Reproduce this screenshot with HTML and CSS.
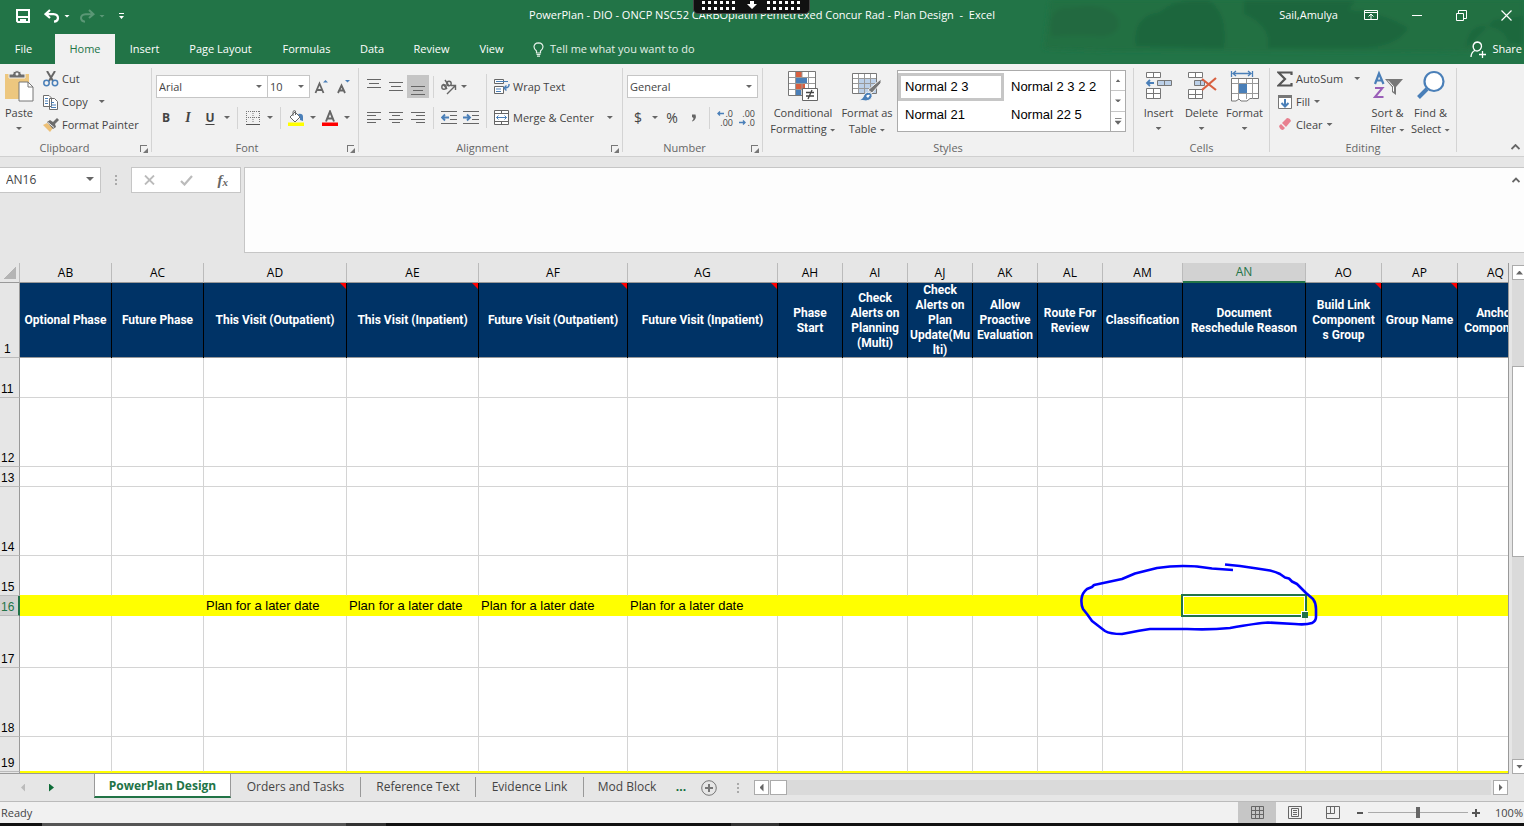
FILE: index.html
```html
<!DOCTYPE html>
<html lang="en">
<head>
<meta charset="utf-8">
<title>PowerPlan - Plan Design - Excel</title>
<link rel="stylesheet" href="styles.css">
</head>
<body>
<div class="app">
  <header class="top">
    <svg class="top-art" width="504" height="64" viewBox="0 0 504 64" aria-hidden="true">
      <defs><filter id="soft"><feGaussianBlur stdDeviation="2"/></filter></defs>
      <g filter="url(#soft)">
        <path d="M30 0h474v50l-90 2-320-1-70-2z" fill="#216f42"/>
        <path d="M32 36q-6-30 18-28 34-6 46 8 8 16-12 20-28-2-52 0z" fill="#206940"/>
        <path d="M116 46q-4-30 24-34 14-12 34-12h14q20 12 16 48z" fill="#1f663d"/>
        <path d="M224 0h112l-8 10q34 2 60 18-10 18-44 20h-96q4-22-24-34z" fill="#1f663d"/>
        <path d="M446 48q2-24 22-22 18 4 20 16l16 2V16l-30 4z" fill="#1f683e"/>
      </g>
    </svg>
    <div class="titlebar">
      <div class="quick">
        <button aria-label="Save"><svg width="14" height="14" viewBox="0 0 14 14"><path d="M1 1h12v12H2l-1-1z" fill="none" stroke="#fff" stroke-width="2"/><path d="M2 7h10v2H2zM4 10h6v4H8v-2H6v2H4z" fill="#fff"/></svg></button>
        <button class="undo" aria-label="Undo"><svg width="16" height="14" viewBox="0 0 16 14"><path d="M6 1L1.500 5.200 6 9M2 5.200h7.500q4.500.3 4.500 4-.3 3.300-4 3.500" fill="none" stroke="#fff" stroke-width="2.200"/></svg><i class="caret"></i></button>
        <button class="redo" aria-label="Redo"><svg width="16" height="14" viewBox="0 0 16 14"><path d="M10 1l4.500 4.200L10 9M14 5.200H6.500Q2 5.500 2 9.200q.3 3.300 4 3.500" fill="none" stroke="#fff" stroke-width="2"/></svg><i class="caret"></i></button>
        <button class="more" aria-label="Customize"><svg width="5" height="6" viewBox="0 0 5 6"><path d="M0 0h5v1H0zM0 3h5L2.500 6z" fill="#fff"/></svg></button>
      </div>
      <div class="title">PowerPlan - DIO - ONCP NSC52 CARBOplatin Pemetrexed Concur Rad - Plan Design&nbsp; -&nbsp; Excel</div>
      <div class="dock"><svg width="34" height="10" viewBox="0 0 34 10"><path d="M0 2.500h34M0 8.500h34" stroke="#fff" stroke-width="3" stroke-dasharray="3 3"/></svg><svg width="10" height="8" viewBox="0 0 10 8"><path d="M3 0h4v3h3L5 8 0 3h3z" fill="#fff"/></svg><svg width="34" height="10" viewBox="0 0 34 10"><path d="M0 2.500h34M0 8.500h34" stroke="#fff" stroke-width="3" stroke-dasharray="3 3"/></svg></div>
      <div class="window">
        <span>Sail,Amulya</span>
        <button aria-label="Ribbon display options"><svg width="14" height="12" viewBox="0 0 14 12"><path d="M.5 1.500h13v9H.5zM.5 3.500h13M7 10V5M4.500 7.500L7 5l2.500 2.500" fill="none" stroke="#fff"/></svg></button>
        <button aria-label="Minimize"><svg width="10" height="10" viewBox="0 0 10 10"><path d="M0 5.500h10" stroke="#fff"/></svg></button>
        <button aria-label="Restore"><svg width="11" height="11" viewBox="0 0 11 11"><path d="M.5 3.500h7v7h-7zM2.500 3V.5h8v8H8" fill="none" stroke="#fff"/></svg></button>
        <button aria-label="Close"><svg width="11" height="11" viewBox="0 0 11 11"><path d="M.5.5l10 10M10.500.5l-10 10" stroke="#fff" stroke-width="1.200"/></svg></button>
      </div>
    </div>
    <nav class="tabs">
      <button class="file">File</button><button class="on">Home</button><button>Insert</button><button>Page Layout</button><button>Formulas</button><button>Data</button><button>Review</button><button>View</button>
      <button class="tell"><svg width="11" height="15" viewBox="0 0 11 15"><path d="M3.500 11V9Q1 7 1 4.800 1.200 1 5.500.8 9.800 1 10 4.800 10 7 7.500 9v2zM3.500 12.500h4M4 14.200h3" fill="none" stroke="#e4f0e8" stroke-width="1.200"/></svg>Tell me what you want to do</button>
      <button class="share"><svg width="16" height="17" viewBox="0 0 16 17"><path d="M1 16q.3-5 4-6.500Q2.500 7 3.300 4 4.500 1 7.500 1q4 .5 4 4.300Q11 9 7.500 10q-1.500 0-2.500-.5M9 13.500h7M12.500 10v7" fill="none" stroke="#fff" stroke-width="1.300"/></svg>Share</button>
    </nav>
  </header>

  <section class="ribbon">
    <div class="group g-clip">
      <div class="body">
        <button class="big paste"><svg width="30" height="32" viewBox="0 0 30 32"><path d="M1 4h24v25H1z" fill="#edc77f"/><path d="M5 8V4h4V2q4-3 8 0v2h4v4z" fill="#6d6d6d" stroke="#f1f1f1"/><circle cx="13" cy="4" r="1.500" fill="#f1f1f1"/><path d="M15 12h9l5 5v14H15z" fill="#fff" stroke="#777"/><path d="M24 12v5h5" fill="none" stroke="#777"/></svg><span>Paste</span><i class="caret"></i></button>
        <div class="stack">
          <button><svg width="16" height="16" viewBox="0 0 16 16"><path d="M4 0l6 10M12 0L6 10" stroke="#666" stroke-width="2"/><circle cx="3.500" cy="12" r="2.700" fill="none" stroke="#4a7fb8" stroke-width="1.500"/><circle cx="12" cy="12" r="2.700" fill="none" stroke="#4a7fb8" stroke-width="1.500"/></svg>Cut</button>
          <button><svg width="16" height="16" viewBox="0 0 16 16"><path d="M.5 1.500H6L8.500 4v8.500h-8zM6.500 4.500h5l3 3v8h-8z" fill="#fff" stroke="#6d6d6d"/><path d="M2 4.500h3M2 7h3M2 9.500h3M8 8.500h3M8 11h5M8 13.500h5" stroke="#4a7fb8"/></svg>Copy<i class="caret gap"></i></button>
          <button><svg width="16" height="16" viewBox="0 0 16 16"><path d="M0 8l4-2 6 5-3 4z" fill="#edc077"/><path d="M4 5l3-2 3 2 4-4 2 2-4 4 1 3-3 2z" fill="#6d6d6d"/><path d="M5 5.500l6 5" stroke="#f1f1f1"/></svg>Format Painter</button>
        </div>
      </div>
      <div class="label">Clipboard<i class="launch"></i></div>
    </div>

    <div class="group g-font">
      <div class="body rows">
        <div class="line">
          <span class="pick font"><select aria-label="Font"><option>Arial</option></select></span><span class="pick size"><select aria-label="Font size"><option>10</option></select></span>
          <button class="ico" aria-label="Increase font size"><svg width="16" height="16" viewBox="0 0 16 16"><path d="M2.500 14L6.500 4.500 10.500 14M4 11h5" fill="none" stroke="#666" stroke-width="1.800"/><path d="M10 3.500L12.500 1 15 3.500z" fill="#4a7fb8"/></svg></button>
          <button class="ico" aria-label="Decrease font size"><svg width="16" height="16" viewBox="0 0 16 16"><path d="M3 14l3.500-7.500L10 14M4.500 11.500h4" fill="none" stroke="#666" stroke-width="1.800"/><path d="M10 1h5l-2.500 2.500z" fill="#4a7fb8"/></svg></button>
        </div>
        <div class="line">
          <button class="ico b">B</button><button class="ico i">I</button><button class="ico u">U</button><button class="drop" aria-label="Underline options"><i class="caret"></i></button><i class="sep"></i>
          <button class="ico" aria-label="Borders"><svg width="14" height="14" viewBox="0 0 14 14"><path d="M0 .5h14M0 6.500h14M.5 0v12M7 0v12M13.500 0v12" stroke="#777" stroke-dasharray="1 1"/><path d="M0 13.500h14" stroke="#555"/></svg></button><button class="drop" aria-label="Border options"><i class="caret"></i></button><i class="sep"></i>
          <button class="ico" aria-label="Fill color"><svg width="16" height="16" viewBox="0 0 16 16"><path d="M2 7l5-5 5 5-5 5z" fill="#fff" stroke="#666"/><path d="M5 6V1.500Q6 0 7.500 1v4" fill="none" stroke="#666"/><path d="M10 4q5-1 5 3v4l-3-1V7z" fill="#4a7fb8"/><path d="M0 12.500h16V16H0z" fill="#ff0"/></svg></button><button class="drop" aria-label="Fill options"><i class="caret"></i></button>
          <button class="ico" aria-label="Font color"><svg width="16" height="16" viewBox="0 0 16 16"><path d="M4 11.500L8 1.500l4 10M5.500 8.500h5" fill="none" stroke="#666" stroke-width="2"/><path d="M0 12.500h16V16H0z" fill="#f00"/></svg></button><button class="drop" aria-label="Font color options"><i class="caret"></i></button>
        </div>
      </div>
      <div class="label">Font<i class="launch"></i></div>
    </div>

    <div class="group g-align">
      <div class="body">
        <div class="rows">
          <div class="line">
            <button class="ico" aria-label="Top align"><svg width="14" height="16" viewBox="0 0 14 16"><path d="M0 .5h14M2 4.500h10M0 8.500h14" stroke="#666"/></svg></button>
            <button class="ico" aria-label="Middle align"><svg width="14" height="16" viewBox="0 0 14 16"><path d="M0 3.500h14M2 7.500h10M0 11.500h14" stroke="#666"/></svg></button>
            <button class="ico pressed" aria-label="Bottom align"><svg width="14" height="16" viewBox="0 0 14 16"><path d="M0 7.500h14M2 11.500h10M0 15.500h14" stroke="#666"/></svg></button><i class="sep"></i>
            <button class="ico" aria-label="Orientation"><svg width="18" height="16" viewBox="0 0 18 16"><g fill="none" stroke="#666" stroke-width="1.400"><circle cx="4" cy="8" r="2.200"/><path d="M3 5l4 5"/><circle cx="9" cy="4.500" r="2.200"/><path d="M5 1l4 6M7 15l8-8M11 6.500h4.500V11"/></g></svg></button><button class="drop near" aria-label="Orientation options"><i class="caret"></i></button>
          </div>
          <div class="line">
            <button class="ico" aria-label="Align left"><svg width="14" height="12" viewBox="0 0 14 12"><path d="M0 .5h14M0 3.500h9M0 7.500h14M0 10.500h9" stroke="#666"/></svg></button>
            <button class="ico" aria-label="Center"><svg width="14" height="12" viewBox="0 0 14 12"><path d="M0 .5h14M3 3.500h8M0 7.500h14M3 10.500h8" stroke="#666"/></svg></button>
            <button class="ico" aria-label="Align right"><svg width="14" height="12" viewBox="0 0 14 12"><path d="M0 .5h14M5 3.500h9M0 7.500h14M5 10.500h9" stroke="#666"/></svg></button><i class="sep"></i>
            <button class="ico" aria-label="Decrease indent"><svg width="16" height="14" viewBox="0 0 16 14"><path d="M0 .5h16M9 4.500h7M9 8.500h7M0 12.500h16" stroke="#666"/><path d="M1 6.500h7M4 3.500l-3 3 3 3" fill="none" stroke="#4a7fb8" stroke-width="1.800"/></svg></button>
            <button class="ico" aria-label="Increase indent"><svg width="16" height="14" viewBox="0 0 16 14"><path d="M0 .5h16M9 4.500h7M9 8.500h7M0 12.500h16" stroke="#666"/><path d="M0 6.500h7M4 3.500l3 3-3 3" fill="none" stroke="#4a7fb8" stroke-width="1.800"/></svg></button>
          </div>
        </div>
        <i class="rule"></i>
        <div class="rows">
          <button class="line text"><svg width="16" height="16" viewBox="0 0 16 16"><path d="M.5.5h9v4h-9zM.5 7.500h9v7h-9z" fill="#fff" stroke="#666"/><path d="M2 2.500h12M2 10h5M2 12.500h5" stroke="#4a7fb8"/><path d="M15 5q.5 4-4.500 4M12.500 6.500L10 9l2.500 2.500" fill="none" stroke="#4a7fb8" stroke-width="1.400"/></svg>Wrap Text</button>
          <button class="line text"><svg width="16" height="16" viewBox="0 0 16 16"><path d="M.5.5h14v14H.5zM.5 3.500h14M.5 11.500h14M7.500 .5v3M7.500 11.500v3" fill="#fff" stroke="#666"/><path d="M2.500 7.500h10M4.500 5.500l-2 2 2 2M10.500 5.500l2 2-2 2" fill="none" stroke="#4a7fb8"/></svg>Merge &amp; Center<i class="caret gap"></i></button>
        </div>
      </div>
      <div class="label">Alignment<i class="launch"></i></div>
    </div>

    <div class="group g-num">
      <div class="body rows">
        <div class="line"><span class="pick format"><select aria-label="Number format"><option>General</option></select></span></div>
        <div class="line">
          <button class="ico sym">$</button><button class="drop" aria-label="Currency options"><i class="caret"></i></button><button class="ico sym">%</button><button class="ico" aria-label="Comma style"><svg width="6" height="8" viewBox="0 0 6 8"><path d="M1 .5h3.500Q6 5 1.500 7.500L1 7q1.500-1.500 1.500-3L1 3z" fill="#666"/></svg></button><i class="sep"></i>
          <button class="ico dec" aria-label="Increase decimal"><span><svg width="7" height="5" viewBox="0 0 7 5"><path d="M7 2.500H1M3 .5l-2 2 2 2" fill="none" stroke="#4a7fb8" stroke-width="1.400"/></svg>.0</span><span>.00</span></button>
          <button class="ico dec" aria-label="Decrease decimal"><span>.00</span><span><svg width="7" height="5" viewBox="0 0 7 5"><path d="M0 2.500h6M4 .5l2 2-2 2" fill="none" stroke="#4a7fb8" stroke-width="1.400"/></svg>.0</span></button>
        </div>
      </div>
      <div class="label">Number<i class="launch"></i></div>
    </div>

    <div class="group g-styles">
      <div class="body">
        <button class="big cond"><svg width="32" height="32" viewBox="0 0 32 32"><path d="M1.500 1.500h27v24h-27z" fill="#fff" stroke="#777"/><path d="M9 2h6v5H9zM9 14h9v5H9z" fill="#d86040"/><path d="M9 8h11v5H9zM9 20h5v5H9z" fill="#4a7fb8"/><path d="M2 7.500h26M2 13.500h26M2 19.500h26M8.500 2v23M15 2v5M15 14v11M21.500 2v23" fill="none" stroke="#999"/><path d="M15.500 18.500h15v12h-15z" fill="#fff" stroke="#666"/><path d="M19 22.500h8M19 26h8M25 20l-4 9" stroke="#444" stroke-width="1.300"/></svg><span>Conditional<br>Formatting <i class="caret"></i></span></button>
        <button class="big fmt"><svg width="32" height="32" viewBox="0 0 32 32"><path d="M1.500 3.500h24v20h-24z" fill="#fff" stroke="#777"/><path d="M8 9h17v14H8z" fill="#bcd0e8"/><path d="M2 8.500h23M2 13.500h23M2 18.500h23M7.500 4v19M13.500 4v19M19.500 4v19" stroke="#999"/><path d="M30 9v4L21 23l-4-3z" fill="#777" stroke="#f1f1f1"/><path d="M8 30q4-1 5-5 3-5 8-1 1 6-6 7z" fill="#4a7fb8" stroke="#f1f1f1"/><path d="M15 26q2-2 4-1l-2 3z" fill="#fff"/></svg><span>Format as<br>Table <i class="caret"></i></span></button>
        <div class="gallery">
          <div class="cells"><button class="sel">Normal 2 3</button><button>Normal 2 3 2 2</button><button>Normal 21</button><button>Normal 22 5</button></div>
          <div class="steps"><button aria-label="Row up"><i class="caret up"></i></button><button aria-label="Row down"><i class="caret"></i></button><button aria-label="More styles"><i class="caret bar"></i></button></div>
        </div>
      </div>
      <div class="label">Styles</div>
    </div>

    <div class="group g-cells">
      <div class="body">
        <button class="big"><svg width="28" height="32" viewBox="0 0 28 32"><path d="M1.500 2.500h14v5h-14zM8.500 2.500v5M1.500 18.500h14v10h-14zM8.500 18.500v10M1.500 23.500h14" fill="#fff" stroke="#777"/><path d="M12.500 10.500h14v5h-14zM19.500 10.500v5" fill="#bcd0e8" stroke="#777"/><path d="M2 13h7M5 10l-3 3 3 3" fill="none" stroke="#4a7fb8" stroke-width="1.800"/></svg><span>Insert</span><i class="caret"></i></button>
        <button class="big"><svg width="30" height="32" viewBox="0 0 30 32"><path d="M1.500 2.500h14v5h-14zM8.500 2.500v5M1.500 19.500h14v9h-14zM8.500 19.500v9M1.500 24.500h14" fill="#fff" stroke="#777"/><path d="M7.500 10.500h10v5h-10zM13.500 10.500v5" fill="#bcd0e8" stroke="#777"/><path d="M15 9l14 11M29 8L15 20" stroke="#d86040" stroke-width="2.200"/></svg><span>Delete</span><i class="caret"></i></button>
        <button class="big"><svg width="30" height="32" viewBox="0 0 30 32"><path d="M1.500 1v6M22.500 1v6M3 3.500h18M6 1L3 3.500 6 6M18 1l3 2.500L18 6" fill="none" stroke="#4a7fb8" stroke-width="1.300"/><path d="M1.500 8.500h27v20H20l-3 2.500h-6l-2-2-3 2H1.500z" fill="#fff" stroke="#777"/><path d="M8.500 9v20M16.500 9v20M22.500 9v20M2 13.500h26M2 23.500h26" stroke="#999"/><path d="M9 14h8v9H9z" fill="#4a7fb8"/></svg><span>Format</span><i class="caret"></i></button>
      </div>
      <div class="label">Cells</div>
    </div>

    <div class="group g-edit">
      <div class="body">
        <div class="stack">
          <button><svg width="16" height="16" viewBox="0 0 16 16"><path d="M14.500 4V1.500H1.500L8 8l-6.500 6.500h13V12" fill="none" stroke="#555" stroke-width="2.200"/></svg>AutoSum<i class="caret gap"></i></button>
          <button><svg width="16" height="16" viewBox="0 0 16 16"><path d="M1.500 1.500h13v13h-13z" fill="#fff" stroke="#777"/><path d="M1 1h14v3H1z" fill="#777"/><path d="M8 5v7M4.500 9L8 12.500 11.500 9" fill="none" stroke="#4a7fb8" stroke-width="2"/></svg>Fill<i class="caret"></i></button>
          <button><svg width="16" height="16" viewBox="0 0 16 16"><path d="M5 6l5-5q3 0 4 3l-5 6z" fill="#e8808f"/><path d="M4 7l4 4-2 2q-3 0-4-4z" fill="#e8808f"/></svg>Clear<i class="caret"></i></button>
        </div>
        <button class="big"><svg width="30" height="32" viewBox="0 0 30 32"><path d="M2 14L6 3.500 10.500 14M3.500 10.500h6" fill="none" stroke="#4a7fb8" stroke-width="2.200"/><path d="M2 18h7.500L2 27h8.500" fill="none" stroke="#9a5fb8" stroke-width="2"/><path d="M12 9h18l-7 8v8l-4-3v-5z" fill="#777"/><path d="M15 10.500l5.500 6v5" stroke="#fff" fill="none"/></svg><span>Sort &amp;<br>Filter <i class="caret"></i></span></button>
        <button class="big"><svg width="30" height="32" viewBox="0 0 30 32"><path d="M11 19L2.500 27.500" stroke="#4a7fb8" stroke-width="4"/><circle cx="18" cy="11.500" r="9.500" fill="#fff" stroke="#4a7fb8" stroke-width="2.200"/></svg><span>Find &amp;<br>Select <i class="caret"></i></span></button>
      </div>
      <div class="label">Editing</div>
    </div>
    <button class="collapse" aria-label="Collapse ribbon"><svg width="9" height="6" viewBox="0 0 9 6"><path d="M.5 5l4-4 4 4" fill="none" stroke="#666" stroke-width="1.800"/></svg></button>
  </section>

  <section class="formula">
    <span class="pick name"><input aria-label="Name box" value="AN16"></span>
    <i class="grip"></i>
    <div class="fx">
      <button aria-label="Cancel"><svg width="11" height="10" viewBox="0 0 11 10"><path d="M1 .5l9 9M10 .5l-9 9" stroke="#bbb" stroke-width="1.800"/></svg></button>
      <button aria-label="Enter"><svg width="13" height="11" viewBox="0 0 13 11"><path d="M1 6l3.500 3.500L12 1" fill="none" stroke="#bbb" stroke-width="2.200"/></svg></button>
      <button class="fn">f<small>x</small></button>
    </div>
    <textarea aria-label="Formula bar"></textarea>
    <button class="fold" aria-label="Collapse formula bar"><svg width="8" height="6" viewBox="0 0 8 6"><path d="M.5 5L4 1.500 7.500 5" fill="none" stroke="#666" stroke-width="1.800"/></svg></button>
  </section>

  <main class="work">
    <div class="sheet">
      <table>
        <colgroup><col class="c20"><col class="c92"><col class="c92"><col class="c143"><col class="c132"><col class="c149"><col class="c150"><col class="c65"><col class="c65"><col class="c65"><col class="c65"><col class="c65"><col class="c80"><col class="c123"><col class="c76"><col class="c76"><col class="c76"></colgroup>
        <thead><tr><th class="corner"></th><th>AB</th><th>AC</th><th>AD</th><th>AE</th><th>AF</th><th>AG</th><th>AH</th><th>AI</th><th>AJ</th><th>AK</th><th>AL</th><th>AM</th><th class="cur">AN</th><th>AO</th><th>AP</th><th>AQ</th></tr></thead>
        <tbody>
        <tr class="head h75"><th>1</th><td>Optional Phase</td><td>Future Phase</td><td class="note">This Visit (Outpatient)</td><td class="note">This Visit (Inpatient)</td><td class="note">Future Visit (Outpatient)</td><td class="note">Future Visit (Inpatient)</td><td>Phase<br>Start</td><td>Check<br>Alerts on<br>Planning<br>(Multi)</td><td>Check<br>Alerts on<br>Plan<br>Update(Mu<br>lti)</td><td>Allow<br>Proactive<br>Evaluation</td><td>Route For<br>Review</td><td>Classification</td><td>Document<br>Reschedule Reason</td><td class="note">Build Link<br>Component<br>s Group</td><td class="note">Group Name</td><td>Anchor<br>Component</td></tr>
        <tr class="h40"><th>11</th><td></td><td></td><td></td><td></td><td></td><td></td><td></td><td></td><td></td><td></td><td></td><td></td><td></td><td></td><td></td><td></td></tr>
        <tr class="h69"><th>12</th><td></td><td></td><td></td><td></td><td></td><td></td><td></td><td></td><td></td><td></td><td></td><td></td><td></td><td></td><td></td><td></td></tr>
        <tr class="h20"><th>13</th><td></td><td></td><td></td><td></td><td></td><td></td><td></td><td></td><td></td><td></td><td></td><td></td><td></td><td></td><td></td><td></td></tr>
        <tr class="h69"><th>14</th><td></td><td></td><td></td><td></td><td></td><td></td><td></td><td></td><td></td><td></td><td></td><td></td><td></td><td></td><td></td><td></td></tr>
        <tr class="h40 above"><th>15</th><td></td><td></td><td></td><td></td><td></td><td></td><td></td><td></td><td></td><td></td><td></td><td></td><td></td><td></td><td></td><td></td></tr>
        <tr class="h20 fill"><th class="cur">16</th><td></td><td></td><td>Plan for a later date</td><td>Plan for a later date</td><td>Plan for a later date</td><td>Plan for a later date</td><td></td><td></td><td></td><td></td><td></td><td></td><td class="active"></td><td></td><td></td><td></td></tr>
        <tr class="h52"><th>17</th><td></td><td></td><td></td><td></td><td></td><td></td><td></td><td></td><td></td><td></td><td></td><td></td><td></td><td></td><td></td><td></td></tr>
        <tr class="h69"><th>18</th><td></td><td></td><td></td><td></td><td></td><td></td><td></td><td></td><td></td><td></td><td></td><td></td><td></td><td></td><td></td><td></td></tr>
        <tr class="h35 above"><th>19</th><td></td><td></td><td></td><td></td><td></td><td></td><td></td><td></td><td></td><td></td><td></td><td></td><td></td><td></td><td></td><td></td></tr>
        <tr class="h20 fill"><th></th><td></td><td></td><td></td><td></td><td></td><td></td><td></td><td></td><td></td><td></td><td></td><td></td><td></td><td></td><td></td><td></td></tr>
        </tbody>
      </table>
      <svg class="ink" width="240" height="76" viewBox="0 0 240 76" aria-hidden="true"><path d="M145 1.500L160 3L177 5.500L190 7.500Q196 9 200 11L205 14.500L209 15.500L212 18.500L217 21L226 30L233 36Q236 40 236 46V54Q236 58 232 60Q226 62 215 61L188 59.500Q178 60 150 65Q130 67 107 66H70Q62 67 42 71Q30 71 25 68L12 58L7 51L3 46Q1 42 1.500 36Q2 30 7 26L12 24L14 22L42 16L55 10.500L65 8L77 5Q90 3 103 3Q112 3 117 3.500L132 5.500L153 7" fill="none" stroke="#00f" stroke-width="2.600" stroke-linejoin="round"/></svg>
    </div>
    <div class="vbar"><button aria-label="Scroll up"><i class="caret up"></i></button><div class="vtrack"><i class="vthumb"></i></div><button aria-label="Scroll down"><i class="caret"></i></button></div>
  </main>

  <footer class="sheets">
    <div class="nav"><button class="prev" aria-label="Previous sheets"></button><button class="next" aria-label="Next sheets"></button></div>
    <button class="tab on">PowerPlan Design</button><button class="tab t2">Orders and Tasks</button><button class="tab t3">Reference Text</button><button class="tab t4">Evidence Link</button><button class="tab t5">Mod Block</button>
    <button class="dots">...</button>
    <button class="add" aria-label="New sheet"><svg width="16" height="16" viewBox="0 0 16 16"><circle cx="8" cy="8" r="7.300" fill="none" stroke="#777"/><path d="M4 8h8M8 4v8" stroke="#777" stroke-width="2"/></svg></button>
    <i class="grip"></i>
    <div class="hbar"><button aria-label="Scroll left"><i class="caret left"></i></button><i class="hthumb"></i><div class="htrack"></div><button aria-label="Scroll right"><i class="caret right"></i></button></div>
  </footer>

  <div class="status">
    <span class="ready">Ready</span>
    <button class="view on" aria-label="Normal view"><svg width="13" height="13" viewBox="0 0 13 13"><path d="M.5.5h12v12H.5zM4.500 0v13M8.500 0v13M0 4.500h13M0 8.500h13" fill="none" stroke="#666"/></svg></button>
    <button class="view" aria-label="Page layout view"><svg width="14" height="13" viewBox="0 0 14 13"><path d="M.5.5h13v12H.5zM3.500 2.500h7v8h-7zM5 4.500h4M5 6.500h4M5 8.500h4" fill="none" stroke="#666"/></svg></button>
    <button class="view" aria-label="Page break view"><svg width="14" height="13" viewBox="0 0 14 13"><path d="M.5.5h13v12H.5zM.5 7.500h8v-7M4.500.5v7" fill="none" stroke="#666"/></svg></button>
    <button class="zoom" aria-label="Zoom out"><svg width="8" height="8" viewBox="0 0 8 8"><path d="M1 4h6" stroke="#555" stroke-width="2"/></svg></button>
    <input type="range" aria-label="Zoom" min="0" max="100" value="50">
    <button class="zoom" aria-label="Zoom in"><svg width="8" height="8" viewBox="0 0 8 8"><path d="M0 4h8M4 0v8" stroke="#555" stroke-width="2"/></svg></button>
    <span class="pct">100%</span>
  </div>
  <div class="taskbar"><i class="s1"></i><i class="s2"></i><i class="s3"></i></div>
</div>
</body>
</html>
```
FILE: styles.css
```css
* { box-sizing: border-box; }
body { margin: 0; font: 11px/16px "Open Sans", "Noto Sans", sans-serif; color: #444; overflow: hidden; }
button { font: inherit; color: inherit; background: none; border: 0; padding: 0; display: flex; align-items: center; justify-content: center; flex: none; }
input, select, textarea { font: inherit; color: inherit; border: 0; outline: 0; margin: 0; background: none; }
svg { display: block; flex: none; }
i { font-style: normal; }
.app { display: flex; flex-direction: column; height: 100vh; background: #e6e6e6; }

.caret { display: inline-block; flex: none; width: 6px; height: 3px; background: #666; clip-path: polygon(0 0, 100% 0, 50% 100%); vertical-align: middle; }
.caret.up { clip-path: polygon(50% 0, 100% 100%, 0 100%); width: 7px; height: 4px; }
.caret.left, .caret.right { width: 4px; height: 8px; clip-path: polygon(100% 0, 100% 100%, 0 50%); }
.caret.right { clip-path: polygon(0 0, 100% 50%, 0 100%); }
.caret.bar { height: 7px; width: 7px; clip-path: polygon(0 0, 100% 0, 100% 14%, 0 14%, 0 43%, 100% 43%, 50% 100%, 0 43%); }

/* title bar and ribbon tabs */
.top { position: relative; background: #227447; color: #fff; flex: none; }
.top-art { position: absolute; right: 0; top: 0; }
.titlebar { position: relative; display: flex; justify-content: space-between; height: 34px; padding: 0 12px 0 16px; }
.titlebar .caret { background: #fff; }
.quick { display: flex; align-items: center; padding-bottom: 2px; }
.quick .undo { margin-left: 14px; gap: 4px; }
.quick .redo { margin-left: 9px; gap: 4px; opacity: .25; }
.quick .more { margin-left: 14px; }
.title { position: absolute; left: 50%; top: 0; transform: translateX(-50%); line-height: 30px; white-space: nowrap; }
.dock { position: absolute; left: calc(50% - 69px); top: 0; width: 117px; height: 14px; background: #111; border: 1px solid #444; border-top: 0; border-radius: 0 0 5px 5px; display: flex; justify-content: space-between; align-items: center; padding: 0 8px 3px; }
.window { display: flex; align-items: center; margin-left: auto; padding-bottom: 4px; }
.window span { margin-right: 26px; }
.window button + button { margin-left: 34px; }
.tabs { position: relative; display: grid; grid-template-columns: 55px 60px 59px 93px 79px 52px 67px 53px auto 1fr; height: 30px; }
.tabs .on { background: #f1f1f1; color: #227447; }
.tabs .file { padding-right: 8px; }
.tabs .tell { gap: 6px; padding-left: 15px; color: #e4f0e8; }
.tabs .share { justify-self: end; gap: 6px; padding-right: 2px; }

/* ribbon */
.ribbon { display: flex; background: #f1f1f1; border-bottom: 1px solid #d0d0d0; height: 93px; padding: 4px 0; flex: none; }
.group { display: flex; flex-direction: column; border-right: 1px solid #d4d4d4; flex: none; }
.body { display: flex; height: 72px; align-items: flex-start; flex: none; }
.label { position: relative; text-align: center; line-height: 16px; color: #666; padding-right: 16px; }
.launch { position: absolute; right: 4px; top: 5px; width: 7px; height: 7px; border: 1px solid #777; border-width: 1px 0 0 1px; }
.launch::after { content: ""; position: absolute; left: 2px; top: 2px; width: 5px; height: 5px; background: #777; clip-path: polygon(100% 0, 100% 100%, 0 100%); }
.g-clip { width: 152px; }
.g-clip .label { padding-right: 22px; }
.g-font { width: 207px; }
.g-align { width: 264px; }
.g-num { width: 140px; }
.g-styles { width: 371px; }
.g-cells { width: 136px; }
.g-edit { width: 187px; }
.g-styles .label, .g-cells .label, .g-edit .label { padding-right: 0; }
.big { flex-direction: column; justify-content: flex-start; padding-top: 2px; width: 42px; line-height: 16px; }
.big span { margin-top: 3px; white-space: nowrap; }
.big > .caret { margin-top: 6px; }
.paste { width: 38px; }
.stack { display: flex; flex-direction: column; padding-left: 5px; margin-top: -1px; }
.stack button { height: 23px; justify-content: flex-start; gap: 3px; }
.stack .caret { margin-left: 1px; }
.stack .caret.gap { margin-left: 8px; }
.rows { display: flex; flex-direction: column; align-items: flex-start; gap: 8px; padding: 7px 0 0 3px; }
.line { display: flex; align-items: center; height: 23px; }
.ico { width: 22px; height: 23px; }
.ico.pressed { background: #c5c5c5; }
.drop { width: 12px; height: 23px; }
.drop.near { width: 8px; }
.sep { width: 1px; height: 22px; background: #d4d4d4; margin: 0 4px; }
.rule { width: 1px; height: 54px; background: #d4d4d4; margin: 6px 0 0 4px; }
.g-align .rows { padding-left: 4px; }
.g-num .line { padding-left: 1px; }
.line.text { gap: 3px; padding-left: 3px; }
.line.text .gap { margin-left: 10px; }
.b, .i, .u { font-size: 12px; font-weight: 700; }
.i { font-family: "Liberation Serif", serif; font-style: italic; font-size: 14px; }
.u { text-decoration: underline; text-underline-offset: 2px; }
.sym { font-size: 14px; }
.dec { flex-direction: column; line-height: 9px; font-size: 9px; align-items: flex-end; padding-right: 3px; }
.dec span { display: flex; align-items: center; gap: 1px; height: 9px; }
.pick { position: relative; display: flex; background: #fff; border: 1px solid #c6c6c6; height: 23px; }
.pick::after { content: ""; position: absolute; right: 5px; top: 9px; width: 6px; height: 3px; background: #666; clip-path: polygon(0 0, 100% 0, 50% 100%); pointer-events: none; }
.pick select { appearance: none; width: 100%; padding: 0 2px; }
.pick.font { width: 112px; margin-left: 1px; }
.pick.size { width: 43px; margin-left: -1px; }
.pick.format { width: 131px; }
.cond { width: 78px; margin-left: 1px; }
.fmt { width: 50px; }
.gallery { display: flex; width: 229px; height: 62px; margin: 2px 0 0 5px; background: #fff; border: 1px solid #ababab; color: #000; }
.cells { display: grid; grid-template-columns: 106px 106px; grid-template-rows: 29px 26px; flex: 1; font: 13px/16px "Liberation Sans", sans-serif; padding-top: 2px; }
.cells button { justify-content: flex-start; padding-left: 7px; }
.cells .sel { border: 3px solid #c6c6c6; padding-left: 4px; height: 28px; }
.cells button:nth-child(2) { height: 28px; }
.steps { display: flex; flex-direction: column; width: 15px; border-left: 1px solid #ababab; }
.steps button { flex: 1; }
.steps button + button { border-top: 1px solid #c6c6c6; }
.steps .up { width: 5px; height: 3px; }
.g-cells .big { width: 43px; }
.g-cells .body { padding-left: 3px; }
.g-edit .stack { padding-left: 7px; width: 96px; }
.g-edit .big { width: 43px; }
.collapse { margin: auto 4px 0 auto; height: 10px; }

/* formula bar */
.formula { position: relative; display: flex; align-items: flex-start; height: 106px; padding-top: 10px; flex: none; }
.name { width: 101px; height: 26px; border-left: 0; }
.name input { width: 80px; padding-left: 6px; font-size: 12px; }
.name::after { width: 8px; height: 4px; right: 6px; }
.grip { width: 2px; height: 10px; margin: 8px 15px 0 14px; background: repeating-linear-gradient(#aaa 0 2px, transparent 2px 4px); }
.fx { display: flex; justify-content: space-between; width: 110px; height: 26px; background: #fff; border: 1px solid #c6c6c6; padding: 0 12px; margin: 0 3px 0 -1px; }
.fn { font: italic 700 15px "Liberation Serif", serif; color: #666; }
.fn small { font-size: 11px; padding-top: 4px; }
.formula textarea { flex: 1; height: 86px; background: #fdfdfd; border: 1px solid #c6c6c6; border-right: 0; resize: none; }
.fold { position: absolute; right: 4px; top: 20px; }

/* grid */
.work { flex: 1; min-height: 0; display: flex; }
.sheet { position: relative; flex: 1; min-width: 0; overflow: hidden; border-right: 1px solid #999; border-bottom: 1px solid #999; background: #fff; }
table { table-layout: fixed; width: 1534px; border-collapse: separate; border-spacing: 0; color: #000; }
.c20 { width: 20px; } .c65 { width: 65px; } .c76 { width: 76px; } .c80 { width: 80px; } .c92 { width: 92px; }
.c123 { width: 123px; } .c132 { width: 132px; } .c143 { width: 143px; } .c149 { width: 149px; } .c150 { width: 150px; }
th { background: #e6e6e6; font-weight: 400; padding: 0; }
thead th { height: 20px; font-size: 12px; line-height: 18px; border-bottom: 1px solid #999; border-right: 1px solid #bbb; }
thead .cur { background: #d2d2d2; color: #227447; border-bottom: 2px solid #227447; }
.corner { background: linear-gradient(135deg, transparent 50%, #b4b4b4 50%) 4px 4px / 12px 12px no-repeat #e6e6e6; }
tbody th { font: 12px/14px "Liberation Sans", sans-serif; text-align: left; padding: 0 0 1px 1px; vertical-align: bottom; border-right: 1px solid #999; border-bottom: 1px solid #bbb; }
tbody th.cur { background: #d2d2d2; color: #227447; border-right: 2px solid #227447; }
td { border-right: 1px solid #d4d4d4; border-bottom: 1px solid #d4d4d4; padding: 0 2px; font: 13px/18px "Liberation Sans", sans-serif; white-space: nowrap; }
.h20 { height: 20px; } .h35 { height: 35px; } .h40 { height: 40px; } .h52 { height: 52px; } .h69 { height: 69px; } .h75 { height: 75px; }
.head th { padding-left: 4px; }
.head td { position: relative; background: #003366; color: #fff; font: 700 12px/15px Roboto, sans-serif; text-align: center; padding: 0; border-right-color: #000; border-bottom: 0; box-shadow: inset 0 -1px #999; }
.note::after { content: ""; position: absolute; right: 0; top: 0; border: 3px solid #f00; border-left-color: transparent; border-bottom-color: transparent; }
.above td { border-bottom-color: #ff0; }
.fill td { background: #ff0; border-color: #ff0; }
td.active { position: relative; }
.active::before { content: ""; position: absolute; inset: -2px; border: 2px solid #227447; box-shadow: inset 0 0 0 1px #fff; }
.active::after { content: ""; position: absolute; right: -3px; bottom: -3px; width: 6px; height: 6px; background: #227447; border: 1px solid #fff; border-width: 1px 0 0 1px; }
.ink { position: absolute; left: 1080px; top: 300px; }
.vbar { width: 15px; padding: 2px 0 0 3px; display: flex; flex-direction: column; overflow: hidden; }
.vbar button, .hbar button { width: 15px; height: 15px; background: #fff; border: 1px solid #ababab; }
.vbar .caret { width: 7px; height: 4px; }
.vtrack { flex: 1; background: #dadada; padding-top: 86px; }
.vthumb { display: block; width: 15px; height: 191px; background: #fff; border: 1px solid #ababab; }

/* sheet tabs */
.sheets { display: flex; height: 28px; flex: none; border-bottom: 1px solid #bbb; padding-right: 16px; font-size: 12px; }
.nav { display: flex; align-items: center; gap: 24px; width: 94px; padding-left: 21px; }
.prev, .next { width: 4px; height: 8px; background: #bbb; clip-path: polygon(100% 0, 100% 100%, 0 50%); }
.next { width: 5px; background: #0e6c38; clip-path: polygon(0 0, 100% 50%, 0 100%); }
.tab { height: 24px; padding-top: 2px; }
.tab.on { width: 137px; background: #fff; color: #227447; font-weight: 700; border: 1px solid #999; border-top: 0; border-bottom: 2px solid #227447; }
.t2 { width: 130px; }
.t3 { width: 115px; }
.t4 { width: 108px; }
.t5 { width: 86px; }
.t2, .t3, .t4 { border-right: 1px solid #999; height: 20px; margin-top: 3px; padding: 0; }
.dots { color: #0e6c38; font-weight: 700; width: 22px; height: 26px; }
.add { width: 34px; height: 27px; }
.sheets .grip { margin: 9px 15px 0 11px; }
.hbar { display: flex; align-items: center; flex: 1; gap: 1px; }
.hthumb { width: 17px; height: 15px; background: #fff; border: 1px solid #ababab; }
.htrack { flex: 1; height: 15px; background: #dadada; margin: 0 1px 0 -1px; }

/* status bar */
.status { display: flex; align-items: center; height: 21px; flex: none; background: #f1f1f1; padding: 0 1px; }
.ready { flex: 1; }
.view { width: 38px; height: 21px; }
.view.on { background: #c6c6c6; }
.zoom { width: 16px; height: 21px; }
.status input { appearance: none; width: 100px; height: 11px; background: linear-gradient(#aaa, #aaa) 0 50% / 100% 1px no-repeat; }
.status input::-webkit-slider-thumb { appearance: none; width: 4px; height: 11px; background: #666; }
.pct { width: 39px; text-align: right; }
.taskbar { display: flex; height: 3px; flex: none; background: #111; padding-left: 42px; }
.s1 { width: 304px; background: #555; }
.s2 { width: 40px; background: #333; }
.s3 { width: 48px; background: #333; margin-left: 345px; }
```
